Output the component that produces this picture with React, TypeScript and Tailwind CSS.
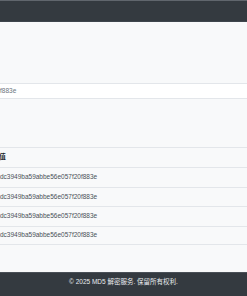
import React from "react";

const hashes = [
  "e10adc3949ba59abbe56e057f20f883e",
  "e10adc3949ba59abbe56e057f20f883e",
  "e10adc3949ba59abbe56e057f20f883e",
  "e10adc3949ba59abbe56e057f20f883e",
];

const App = () => {
  return (
    <div className="w-[247px] h-[296px] overflow-hidden flex flex-col bg-[#f8f9fa] font-['Liberation_Sans','Noto_Sans_CJK_SC',sans-serif] text-[6.5px] leading-none">
      {/* Navbar */}
      <div className="h-px shrink-0 bg-[#60666d]" />
      <div className="h-[21px] shrink-0 bg-[#343a40] border-b border-[#3f454c]" />

      {/* Main */}
      <main className="flex-1 flex flex-col overflow-hidden">
        <div className="h-[61px] shrink-0" />

        {/* Input */}
        <div className="h-[16px] shrink-0 flex items-center bg-white border-y border-[#e3e6ea] text-[#6c757d] overflow-hidden">
          <span className="-ml-[95.4px] whitespace-nowrap">
            e10adc3949ba59abbe56e057f20f883e
          </span>
        </div>

        <div className="h-[48px] shrink-0" />

        {/* Result table */}
        <div className="flex flex-col text-[#495057] overflow-hidden">
          <div className="h-[20px] flex items-center border-t border-[#e3e6ea]">
            <span className="-ml-[14.5px] font-bold text-[#212529] whitespace-nowrap">
              MD5值
            </span>
          </div>
          {hashes.map((h, i) => (
            <div
              key={i}
              className="h-[19.5px] flex items-center border-t border-[#e3e6ea] last:border-b"
            >
              <span className="-ml-[14.5px] whitespace-nowrap">{h}</span>
            </div>
          ))}
        </div>
      </main>

      {/* Footer */}
      <footer className="h-[24px] shrink-0 bg-[#343a40] border-t border-[#4a5057] flex justify-center pt-[6px] text-[#e9ecef]">
        <p>© 2025 MD5 解密服务. 保留所有权利.</p>
      </footer>
    </div>
  );
};

export default App;
